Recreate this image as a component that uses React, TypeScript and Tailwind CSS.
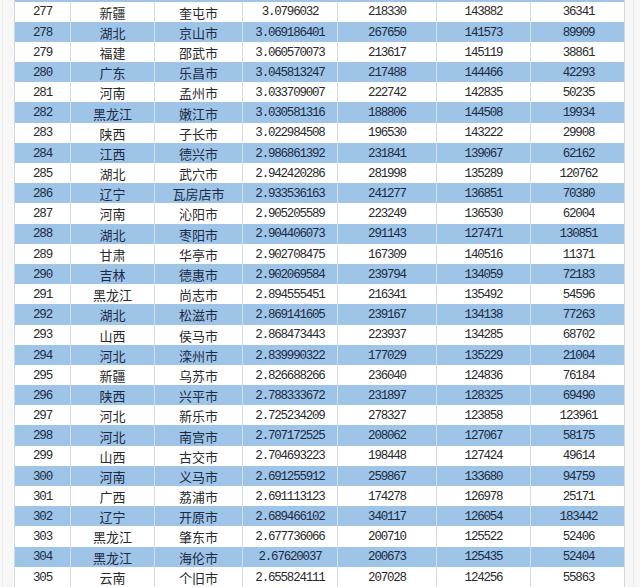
const rows: [string, string, string, string, string, string, string][] = [
  ['277', '新疆', '奎屯市', '3.0796032', '218330', '143882', '36341'],
  ['278', '湖北', '京山市', '3.069186401', '267650', '141573', '89909'],
  ['279', '福建', '邵武市', '3.060570073', '213617', '145119', '38861'],
  ['280', '广东', '乐昌市', '3.045813247', '217488', '144466', '42293'],
  ['281', '河南', '孟州市', '3.033709007', '222742', '142835', '50235'],
  ['282', '黑龙江', '嫩江市', '3.030581316', '188806', '144508', '19934'],
  ['283', '陕西', '子长市', '3.022984508', '196530', '143222', '29908'],
  ['284', '江西', '德兴市', '2.986861392', '231841', '139067', '62162'],
  ['285', '湖北', '武穴市', '2.942420286', '281998', '135289', '120762'],
  ['286', '辽宁', '瓦房店市', '2.933536163', '241277', '136851', '70380'],
  ['287', '河南', '沁阳市', '2.905205589', '223249', '136530', '62004'],
  ['288', '湖北', '枣阳市', '2.904406073', '291143', '127471', '130851'],
  ['289', '甘肃', '华亭市', '2.902708475', '167309', '140516', '11371'],
  ['290', '吉林', '德惠市', '2.902069584', '239794', '134059', '72183'],
  ['291', '黑龙江', '尚志市', '2.894555451', '216341', '135492', '54596'],
  ['292', '湖北', '松滋市', '2.869141605', '239167', '134138', '77263'],
  ['293', '山西', '侯马市', '2.868473443', '223937', '134285', '68702'],
  ['294', '河北', '滦州市', '2.839990322', '177029', '135229', '21004'],
  ['295', '新疆', '乌苏市', '2.826688266', '236040', '124836', '76184'],
  ['296', '陕西', '兴平市', '2.788333672', '231897', '128325', '69490'],
  ['297', '河北', '新乐市', '2.725234209', '278327', '123858', '123961'],
  ['298', '河北', '南宫市', '2.707172525', '208062', '127067', '58175'],
  ['299', '山西', '古交市', '2.704693223', '198448', '127424', '49614'],
  ['300', '河南', '义马市', '2.691255912', '259867', '133680', '94759'],
  ['301', '广西', '荔浦市', '2.691113123', '174278', '126978', '25171'],
  ['302', '辽宁', '开原市', '2.689466102', '340117', '126054', '183442'],
  ['303', '黑龙江', '肇东市', '2.677736066', '200710', '125522', '52406'],
  ['304', '黑龙江', '海伦市', '2.67620037', '200673', '125435', '52404'],
  ['305', '云南', '个旧市', '2.655824111', '207028', '124256', '55863'],
];

const num = "pt-[2px] font-['Liberation_Mono',monospace] text-[12.5px] tracking-[-1.2px]";
const han = "pt-px font-['Noto_Sans_CJK_SC','Noto_Sans',sans-serif] text-[13px]";

function Row({ cells, blue }: { cells: string[]; blue: boolean }) {
  return (
    <div
      className={`grid h-[20.19px] grid-cols-[56px_84px_88px_95px_99px_94px_95px] ${
        blue ? 'bg-[#9ec4e7] text-[#1c2a45]' : 'bg-white text-[#2a2a2a]'
      }`}
    >
      {cells.map((c, i) => (
        <div
          key={i}
          className={`flex items-center justify-center overflow-hidden whitespace-nowrap leading-none ${
            i < 6 ? 'border-r border-[#d6dce3]' : ''
          } ${i === 1 || i === 2 ? han : num}`}
        >
          {c}
        </div>
      ))}
    </div>
  );
}

export default function App() {
  return (
    <div className="flex h-[587px] w-[640px] overflow-hidden bg-[#f7f7f7]">
      <div className="ml-[2px] w-[12px] border-l border-[#ececec]" />
      <div className="flex w-[611px] flex-col border-x border-[#d3d8de]">
        <div className="h-[1.5px] shrink-0 bg-[#9ec4e7]" />
        {rows.map((r, i) => (
          <Row key={r[0]} cells={r} blue={i % 2 === 1} />
        ))}
      </div>
      <div className="ml-[8px] w-px bg-[#e8e8e8]" />
    </div>
  );
}
